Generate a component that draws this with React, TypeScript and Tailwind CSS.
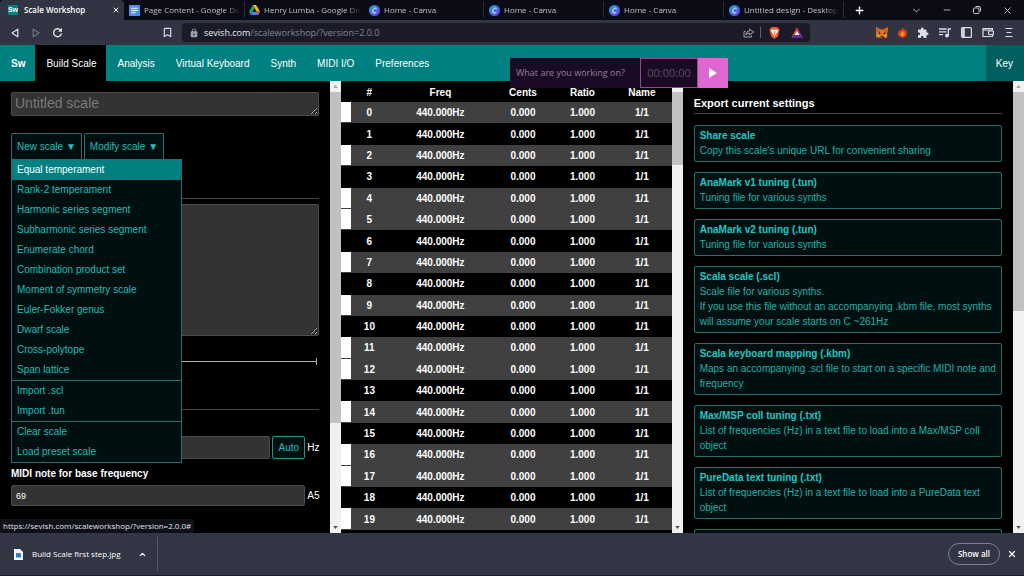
import React, { useState } from "react";
import { Bookmark, ChevronDown, ChevronUp, Minus, Plus, X } from "lucide-react";
import { MdExtension, MdLock } from "react-icons/md";

type TabIcon = "docs" | "drive" | "canva";

const browserTabs: { title: string; icon: TabIcon }[] = [
  { title: "Page Content - Google Do", icon: "docs" },
  { title: "Henry Lumba - Google Dri", icon: "drive" },
  { title: "Home - Canva", icon: "canva" },
  { title: "Home - Canva", icon: "canva" },
  { title: "Home - Canva", icon: "canva" },
  { title: "Untitled design - Desktop", icon: "canva" },
];

const navItems = ["Build Scale", "Analysis", "Virtual Keyboard", "Synth", "MIDI I/O", "Preferences"];

const menuGroups = [
  [
    "Equal temperament",
    "Rank-2 temperament",
    "Harmonic series segment",
    "Subharmonic series segment",
    "Enumerate chord",
    "Combination product set",
    "Moment of symmetry scale",
    "Euler-Fokker genus",
    "Dwarf scale",
    "Cross-polytope",
    "Span lattice",
  ],
  ["Import .scl", "Import .tun"],
  ["Clear scale", "Load preset scale"],
];

const exportOptions = [
  { title: "Share scale", lines: ["Copy this scale's unique URL for convenient sharing"] },
  { title: "AnaMark v1 tuning (.tun)", lines: ["Tuning file for various synths"] },
  { title: "AnaMark v2 tuning (.tun)", lines: ["Tuning file for various synths"] },
  {
    title: "Scala scale (.scl)",
    lines: [
      "Scale file for various synths.",
      "If you use this file without an accompanying .kbm file, most synths will assume your scale starts on C ~261Hz",
    ],
  },
  {
    title: "Scala keyboard mapping (.kbm)",
    lines: ["Maps an accompanying .scl file to start on a specific MIDI note and frequency"],
  },
  {
    title: "Max/MSP coll tuning (.txt)",
    lines: ["List of frequencies (Hz) in a text file to load into a Max/MSP coll object"],
  },
  {
    title: "PureData text tuning (.txt)",
    lines: ["List of frequencies (Hz) in a text file to load into a PureData text object"],
  },
  { title: "", lines: [""] },
];

// Colour of each row follows the piano keys, starting at C
const whiteKeys = [0, 2, 4, 5, 7, 9, 11];
const rows = Array.from({ length: 20 }, (_, i) => ({ index: i, white: whiteKeys.includes(i % 12) }));

function TabGlyph({ icon }: { icon: TabIcon }) {
  if (icon === "docs") {
    return (
      <svg viewBox="0 0 20 20" className="size-[11px] shrink-0">
        <rect width="20" height="20" rx="2" fill="#4c8df5" />
        <path d="M4 6h12M4 10h12M4 14h8" stroke="#fff" strokeWidth="2" />
      </svg>
    );
  }
  if (icon === "drive") {
    return (
      <svg viewBox="0 0 20 18" className="h-[10px] w-[11px] shrink-0">
        <path d="M7 0h6l7 12h-6z" fill="#fbbc04" />
        <path d="M7 0l3 5.500L3.500 18 0 12z" fill="#1fa463" />
        <path d="M6.500 12H20l-3.500 6h-13z" fill="#4285f4" />
        <path d="M14 12h6l-3.500 6z" fill="#ea4335" />
      </svg>
    );
  }
  return (
    <svg viewBox="0 0 20 20" className="size-[11px] shrink-0">
      <defs>
        <linearGradient id="canva" x1="0" y1="0" x2="1" y2="1">
          <stop offset="0" stopColor="#12b8d8" />
          <stop offset="0.4" stopColor="#3b7ae0" />
          <stop offset="1" stopColor="#7a2df0" />
        </linearGradient>
      </defs>
      <circle cx="10" cy="10" r="10" fill="url(#canva)" />
      <path d="M13.500 7.500c0-3-4-2.500-5.500.5s-1.500 7 1.500 7c2 0 3.500-1.500 4-2.500" fill="none" stroke="#fff" strokeWidth="1.800" />
    </svg>
  );
}

function TabStrip() {
  return (
    <div className="flex h-5 shrink-0 items-stretch bg-[#0b0b15] text-[8px] text-[#c0c0c8]">
      <div className="flex w-[124px] items-center gap-1.5 rounded-t-sm bg-[#323443] pr-1 pl-2 font-semibold text-white">
        <span className="flex size-[10px] items-center justify-center bg-[#008080] font-['Liberation_Sans',sans-serif] text-[7px] font-bold">Sw</span>
        <span className="flex-1 whitespace-nowrap">Scale Workshop</span>
        <button aria-label="Close tab">
          <X className="size-2" strokeWidth={3} />
        </button>
      </div>
      {browserTabs.map((tab, i) => (
        <div key={i} className="flex w-[120px] items-center gap-1 pl-[5px]">
          <TabGlyph icon={tab.icon} />
          <span className="flex-1 mask-r-from-85% whitespace-nowrap">{tab.title}</span>
          <span className="h-4 w-px bg-[#2c2c38]" />
        </div>
      ))}
      <button aria-label="New tab" className="flex w-[31px] items-center justify-center text-white">
        <Plus className="size-[11px]" strokeWidth={3} />
      </button>
      <div className="flex flex-1 items-center justify-end gap-5 pr-[11px] text-[#c8c8d0]">
        <button aria-label="Search tabs"><ChevronDown className="size-[11px]" strokeWidth={2} /></button>
        <button aria-label="Minimize"><Minus className="size-[10px]" strokeWidth={2} /></button>
        <button aria-label="Restore">
          <svg viewBox="0 0 10 10" className="size-[10px]" fill="none" stroke="currentColor">
            <rect x="1.500" y="3" width="5.500" height="5.500" rx="1" />
            <path d="M3.500 1.500h3.500q1.500 0 1.500 1.500v3.500" />
          </svg>
        </button>
        <button aria-label="Close window"><X className="size-[11px]" strokeWidth={2} /></button>
      </div>
    </div>
  );
}

function AddressBar() {
  return (
    <div className="flex h-[25px] shrink-0 items-center bg-[#323443] text-[#dedee6]">
      <div className="flex w-[182px] items-center gap-[11px] pr-[9px] pl-[10px]">
        <button aria-label="Back">
          <svg viewBox="0 0 10 10" className="size-[10px]" fill="none" stroke="currentColor" strokeWidth="1.200" strokeLinejoin="round">
            <path d="M7.800 1.200v7.600L2 5z" />
          </svg>
        </button>
        <button aria-label="Forward" className="text-[#72727f]">
          <svg viewBox="0 0 10 10" className="size-[10px]" fill="none" stroke="currentColor" strokeWidth="1.200" strokeLinejoin="round">
            <path d="M2.200 1.200v7.600L8 5z" />
          </svg>
        </button>
        <button aria-label="Reload" className="flex-1">
          <svg viewBox="0 0 11 11" className="size-[11px]" fill="none" stroke="currentColor" strokeWidth="1.400">
            <path d="M9 3.600A4 4 0 1 0 9.500 6.500" />
            <path d="M10 .8V4.800H6z" fill="currentColor" stroke="none" />
          </svg>
        </button>
        <button aria-label="Bookmark">
          <Bookmark className="size-[11px]" strokeWidth={2.5} />
        </button>
      </div>
      <div className="flex h-[19px] flex-1 items-center gap-[5px] rounded-sm bg-[#1a1b27] px-[7px]">
        <MdLock className="size-[10px] text-[#a0a0aa]" />
        <span className="flex-1 text-[9px] text-[#85858f]">
          <span className="text-[#ececf0]">sevish.com</span>/scaleworkshop/?version=2.0.0
        </span>
        <svg viewBox="0 0 11 10" className="h-[10px] w-[11px]" fill="none" stroke="#a0a0aa" strokeLinejoin="round">
          <path d="M2.500 3.500H1V9h7.500V7.500" />
          <path d="M6.500 1l4 3-4 3V5.200Q4 5 2.800 7 3.200 3.200 6.500 2.800z" />
        </svg>
        <span className="mx-px h-[11px] w-px bg-[#62626e]" />
        <svg viewBox="0 0 12 14" className="ml-0.5 h-[12px] w-[11px]">
          <path d="M3 0h6l1.500 1.500L12 3l-.5 2-1.500 6L6 14l-4-3L.5 5 0 3l1.500-1.500z" fill="#f4562a" />
          <path d="M6 3.200L9.500 3l.5 2-2 3L6 11 4 8 2 5l.5-2z" fill="#fff" />
          <path d="M4 5l1.500 1L6 9l.5-3L8 5" fill="none" stroke="#f4562a" strokeWidth=".8" />
        </svg>
        <svg viewBox="0 0 12 11" className="ml-1.5 h-[11px] w-[12px]">
          <path d="M6 0L6 4 3.500 8 0 11z" fill="#e8431f" />
          <path d="M6 0l6 11-3.500-3L6 4z" fill="#b02a8a" />
          <path d="M0 11l3.500-3h5L12 11z" fill="#5b2f9a" />
          <path d="M6 3.800L8.500 8h-5z" fill="#fff" />
        </svg>
      </div>
      <div className="flex w-[214px] items-center justify-end gap-[10px] pr-[10px]">
        <svg viewBox="0 0 24 22" className="h-[11px] w-[12px]">
          <path d="M1 0l8 5h6l8-5 1 5-2 7 1 5-2 5-6-2-3 2h-4l-3-2-6 2-2-5 1-5-2-7z" fill="#e2761b" />
          <path d="M1 0l8 5-2 5-6 1zM23 0l-8 5 2 5 6 1z" fill="#c9651a" />
          <path d="M5 10l5 3-4 1.500zM19 10l-5 3 4 1.500z" fill="#2b2028" />
          <path d="M9 18h6l-1 3h-4z" fill="#3a2620" />
          <path d="M3 15l4 1 1 4-5 1zM21 15l-4 1-1 4 5 1z" fill="#f0963c" />
        </svg>
        <svg viewBox="0 0 12 14" className="h-[11px] w-[9px]">
          <path d="M6 0c1 2 3 2.500 4 4l1.500-.5C11 5 12 6 12 8.500 12 12 9 14 6 14s-6-2-6-5.500C0 6 1.500 5.500 1.500 3.500L3 4.500C4 3 6 2.500 6 0z" fill="#d9381e" />
          <path d="M6 4.500L9.500 9 6 12.500 2.500 9z" fill="#f7a823" />
          <path d="M4 8h1.200M6.800 8H8" stroke="#5a2010" />
        </svg>
        <MdExtension className="size-[12px]" />
        <svg viewBox="0 0 12 10" className="h-[10px] w-[12px]" fill="none" stroke="currentColor" strokeWidth="1.300">
          <path d="M0 1h7.500M0 3.800h7.500M0 6.600h4M12 1H9.300v6" />
          <circle cx="8" cy="7.600" r="1.300" fill="currentColor" />
        </svg>
        <svg viewBox="0 0 11 11" className="size-[11px]" fill="none" stroke="currentColor" strokeWidth="1.200">
          <rect x=".6" y=".6" width="9.800" height="9.800" rx="1" />
          <path d="M2.500 1v9" strokeWidth="2.500" />
        </svg>
        <svg viewBox="0 0 12 11" className="h-[11px] w-[12px]" fill="none" stroke="currentColor" strokeWidth="1.200">
          <path d="M10.500 3V1.500H1v8h9.500V8" />
          <path d="M1 3h9.500" />
          <rect x="6.500" y="4" width="5" height="3.500" rx="1" />
        </svg>
        <svg viewBox="0 0 10 11" className="h-[11px] w-[10px]" fill="none" stroke="currentColor" strokeWidth="1.200">
          <path d="M1.500 1.500h7M2.500 5.500h5M1.500 9.500h7" />
        </svg>
      </div>
    </div>
  );
}

function Scrollbar({ thumb }: { thumb: string }) {
  return (
    <div aria-hidden="true" className="flex w-[11px] shrink-0 flex-col bg-[#f1f1f1]">
      <div className="flex h-[11px] items-center justify-center">
        <svg viewBox="0 0 6 4" className="h-[3px] w-[5px]" fill="#a3a3a3"><path d="M3 0l3 4H0z" /></svg>
      </div>
      <div className="flex-1">
        <div className={`bg-[#c1c1c1] ${thumb}`} />
      </div>
      <div className="flex h-[11px] items-center justify-center">
        <svg viewBox="0 0 6 4" className="h-[3px] w-[5px]" fill="#505050"><path d="M3 4l3-4H0z" /></svg>
      </div>
    </div>
  );
}

function ScaleMenu() {
  const [active, setActive] = useState("Equal temperament");

  return (
    <div className="absolute top-full left-0 z-10 w-[171px] border border-[#27706b] bg-[#001010]">
      {menuGroups.map((group, g) => (
        <ul key={g} className={g > 0 ? "border-t border-[#27706b]" : ""}>
          {group.map((item) => (
            <li key={item}>
              <a
                href="#"
                onMouseEnter={() => setActive(item)}
                className={`block px-[5px] leading-5 ${active === item ? "bg-[#008080] text-white" : "text-[#22bdb8]"}`}
              >
                {item}
              </a>
            </li>
          ))}
        </ul>
      ))}
    </div>
  );
}

function BuildPanel() {
  return (
    <section className="flex min-w-0">
      <div className="flex min-w-0 flex-1 flex-col px-[11px] pt-[11px]">
        <textarea
          aria-label="Scale name"
          placeholder="Untitled scale"
          className="block h-6 w-full shrink-0 rounded-xs border border-[#4c4c4c] bg-[#333] px-[3px] text-[14px] leading-[21px] placeholder:text-[#7a7a7a]"
        />
        <div className="relative mt-[17px] flex shrink-0 gap-0.5 text-[#22bdb8]">
          <button className="h-[26px] rounded-t-xs border border-b-0 border-[#2a6f6a] bg-[#001010] px-[5px]">New scale ▼</button>
          <button className="h-[26px] rounded-t-xs border border-b-0 border-[#2a6f6a] bg-[#001010] px-[5px]">Modify scale ▼</button>
          <ScaleMenu />
        </div>
        <hr className="mt-[39px] border-[#444]" />
        <textarea
          aria-label="Scale data"
          className="mt-[5px] block h-[132px] w-full shrink-0 rounded-xs border border-[#4c4c4c] bg-[#333]"
        />
        <div className="mt-[21px] flex h-[9px] shrink-0 items-center pr-0.5">
          <span className="h-px flex-1 bg-[#b0b0b0]" />
          <span className="h-[7px] w-px bg-[#b0b0b0]" />
        </div>
        <hr className="mt-[43px] border-[#444]" />
        <div className="mt-[26px] flex shrink-0 items-center gap-0.5">
          <input aria-label="Base frequency" className="h-[23px] min-w-0 flex-1 rounded-xs border border-[#4c4c4c] bg-[#333] px-1" />
          <button className="h-[23px] w-[33px] rounded-xs border border-[#2a8f8a] bg-[#001010] text-[#22bdb8]">Auto</button>
          <span className="w-3 whitespace-nowrap">Hz</span>
        </div>
        <label htmlFor="base-midi" className="mt-[5px] leading-5 font-bold">
          MIDI note for base frequency
        </label>
        <div className="mt-px flex shrink-0 items-center gap-0.5">
          <input
            id="base-midi"
            defaultValue="69"
            className="h-[21px] min-w-0 flex-1 rounded-xs border border-[#4c4c4c] bg-[#333] px-1 text-[9px]"
          />
          <span className="w-3 whitespace-nowrap">A5</span>
        </div>
      </div>
      <Scrollbar thumb="h-[77%]" />
    </section>
  );
}

function TuningTable() {
  return (
    <section className="flex min-w-0">
      <div className="min-w-0 flex-1 overflow-hidden pt-px">
        <table className="h-[448px] w-full table-fixed border-separate border-spacing-0 text-center font-bold">
          <thead>
            <tr>
              <th className="h-5 w-[3%]" />
              <th className="w-[11%]">#</th>
              <th className="w-[32%]">Freq</th>
              <th className="w-[18%]">Cents</th>
              <th className="w-[18%]">Ratio</th>
              <th className="w-[18%]">Name</th>
            </tr>
          </thead>
          <tbody>
            {rows.map((row) => (
              <tr key={row.index} className={row.white ? "bg-[#404040]" : "bg-black"}>
                <td className={row.white ? "h-5 border-b border-[#404040] bg-white" : "h-5 border-b border-black"} />
                <td>{row.index}</td>
                <td>440.000Hz</td>
                <td>0.000</td>
                <td>1.000</td>
                <td>1/1</td>
              </tr>
            ))}
          </tbody>
        </table>
      </div>
      <Scrollbar thumb="h-[17%]" />
    </section>
  );
}

function ExportPanel() {
  return (
    <section className="flex min-w-0">
      <div className="flex min-w-0 flex-1 flex-col overflow-hidden px-[11px] pt-3">
        <h2 className="shrink-0 border-b border-[#444] text-[11px] leading-5 font-bold">Export current settings</h2>
        <div className="mt-[11px] flex flex-col gap-[10px]">
          {exportOptions.map((option, i) => (
            <a
              key={i}
              href="#"
              className="block min-h-[37px] shrink-0 rounded-xs border border-[#27706b] bg-[#001010] px-[5px] pt-0.5 pb-[3px] leading-[15px] text-[#22b0ab]"
            >
              <p className="font-bold text-[#20c8c3]">{option.title}</p>
              {option.lines.map((line) => (
                <p key={line}>{line}</p>
              ))}
            </a>
          ))}
        </div>
      </div>
      <Scrollbar thumb="h-[51%]" />
    </section>
  );
}

function TimerWidget() {
  return (
    <div className="absolute top-[58px] left-[510px] z-20 flex h-[30px] font-['Open_Sans',sans-serif]">
      <input
        aria-label="What are you working on?"
        placeholder="What are you working on?"
        className="w-[130px] bg-[#1c0a24] px-[6px] text-[9px] placeholder:text-[#8f8297]"
      />
      <span className="flex w-[58px] items-center justify-center border border-[#85508c] bg-[#1c0a24] text-[11px] text-[#5c4c66]">00:00:00</span>
      <button aria-label="Start timer" className="flex w-[30px] items-center justify-center bg-[#dd68d2]">
        <svg viewBox="0 0 10 12" className="h-3 w-[10px]" fill="#fff"><path d="M1 1l8 5-8 5z" /></svg>
      </button>
    </div>
  );
}

function DownloadBar() {
  return (
    <footer className="flex h-[43px] shrink-0 items-center border-b border-[#1c1c26] bg-[#323544] pr-[7px] pl-[14px] font-['Open_Sans',sans-serif] text-[8px] text-white">
      <svg viewBox="0 0 9 11" className="h-[11px] w-[9px]">
        <path d="M0 0h6l3 3v8H0z" fill="#f4f6fa" />
        <path d="M2 4h4l1 1v3.500H2z" fill="#2f7fc0" />
      </svg>
      <span className="ml-[9px] w-[106px]">Build Scale first step.jpg</span>
      <button aria-label="Download options"><ChevronUp className="size-[9px]" strokeWidth={3} /></button>
      <span className="ml-[10px] h-[34px] w-px bg-[#55586a]" />
      <button className="ml-auto h-[22px] w-[52px] rounded-full border border-[#7d8090] font-semibold">Show all</button>
      <button aria-label="Close" className="ml-[7px]"><X className="size-[10px]" strokeWidth={3} /></button>
    </footer>
  );
}

export default function App() {
  return (
    <div className="relative flex h-screen flex-col overflow-hidden bg-black font-['Liberation_Sans',Arial,sans-serif] text-[10px] text-white">
      <div className="font-['Open_Sans',sans-serif]">
        <TabStrip />
        <AddressBar />
      </div>
      <nav className="flex h-9 shrink-0 items-stretch bg-[#008080]">
        <a href="#" className="flex items-center pr-[10px] pl-[11px] font-bold">Sw</a>
        {navItems.map((item, i) => (
          <a key={item} href="#" className={`flex items-center pr-[10px] pl-[11px] ${i === 0 ? "bg-black" : ""}`}>
            {item}
          </a>
        ))}
        <a href="#" className="ml-auto flex items-center bg-[#006060] pr-[11px] pl-[10px]">Key</a>
      </nav>
      <main className="relative grid min-h-0 flex-1 grid-cols-3 grid-rows-1">
        <BuildPanel />
        <TuningTable />
        <ExportPanel />
        <div className="absolute bottom-0 left-0 rounded-tr-xs bg-[#10101b] px-[3px] font-['Open_Sans',sans-serif] text-[8px] leading-[14px] text-[#e0e0e6]">
          https://sevish.com/scaleworkshop/?version=2.0.0#
        </div>
      </main>
      <DownloadBar />
      <TimerWidget />
    </div>
  );
}
